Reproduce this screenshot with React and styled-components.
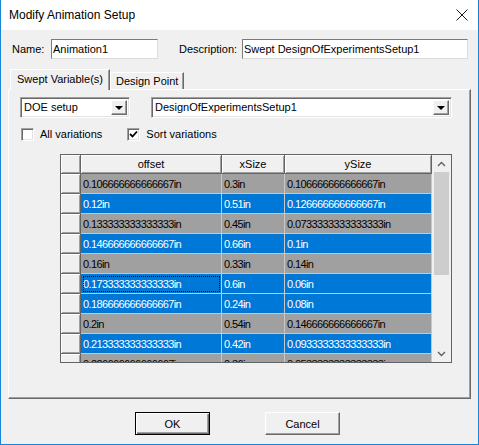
import React from "react";
import styled, { createGlobalStyle } from "styled-components";

const rows = [
  ["0.106666666666667in", "0.3in", "0.106666666666667in", false],
  ["0.12in", "0.51in", "0.126666666666667in", true],
  ["0.133333333333333in", "0.45in", "0.0733333333333333in", false],
  ["0.146666666666667in", "0.66in", "0.1in", true],
  ["0.16in", "0.33in", "0.14in", false],
  ["0.173333333333333in", "0.6in", "0.06in", true],
  ["0.186666666666667in", "0.24in", "0.08in", true],
  ["0.2in", "0.54in", "0.146666666666667in", false],
  ["0.213333333333333in", "0.42in", "0.0933333333333333in", true],
  ["0.226666666666667in", "0.36in", "0.0533333333333333in", false],
];

function App() {
  return (
    <>
      <GlobalStyle />
      <Window>
        <TitleBar>
          <Title>Modify Animation Setup</Title>
          <CloseIcon width="12" height="12" viewBox="0 0 12 12">
            <path d="M0.5 0.5 L11.5 11.5 M11.5 0.5 L0.5 11.5" stroke="#1a1a1a" strokeWidth="1" fill="none" />
          </CloseIcon>
        </TitleBar>
        <Body>
          <FieldRow>
            <Label>Name:</Label>
            <TextBox $width={107}>Animation1</TextBox>
            <Label $gap={21}>Description:</Label>
            <TextBox $width={226}>Swept DesignOfExperimentsSetup1</TextBox>
          </FieldRow>

          <TabStrip>
            <Tab $active>Swept Variable(s)</Tab>
            <Tab>Design Point</Tab>
          </TabStrip>
          <Panel>
            <ComboRow>
              <Combo $width={110}>
                <ComboText>DOE setup</ComboText>
                <ComboButton>
                  <Arrow />
                </ComboButton>
              </Combo>
              <Combo $width={301}>
                <ComboText>DesignOfExperimentsSetup1</ComboText>
                <ComboButton>
                  <Arrow />
                </ComboButton>
              </Combo>
            </ComboRow>

            <CheckRow>
              <CheckItem>
                <CheckBox />
                All variations
              </CheckItem>
              <CheckItem>
                <CheckBox>
                  <svg width="9" height="9" viewBox="0 0 9 9">
                    <path d="M1 4 L3.5 6.5 L8 1.5" stroke="#000" strokeWidth="1.8" fill="none" />
                  </svg>
                </CheckBox>
                Sort variations
              </CheckItem>
            </CheckRow>

            <GridFrame>
              <GridBody>
                <Row $header>
                  <RowHead />
                  <HeadCell>offset</HeadCell>
                  <HeadCell>xSize</HeadCell>
                  <HeadCell>ySize</HeadCell>
                </Row>
                {rows.map(([offset, x, y, selected], i) => (
                  <Row key={i}>
                    <RowHead />
                    <Cell $selected={selected} $focus={i === 5}>{offset}</Cell>
                    <Cell $selected={selected}>{x}</Cell>
                    <Cell $selected={selected}>{y}</Cell>
                  </Row>
                ))}
              </GridBody>
              <ScrollBar>
                <ScrollArrow>
                  <svg width="9" height="6" viewBox="0 0 9 6">
                    <path d="M1 5 L4.5 1.5 L8 5" stroke="#606060" strokeWidth="1.4" fill="none" />
                  </svg>
                </ScrollArrow>
                <Thumb />
                <ScrollSpace />
                <ScrollArrow>
                  <svg width="9" height="6" viewBox="0 0 9 6">
                    <path d="M1 1 L4.5 4.5 L8 1" stroke="#606060" strokeWidth="1.4" fill="none" />
                  </svg>
                </ScrollArrow>
              </ScrollBar>
            </GridFrame>
          </Panel>

          <ButtonRow>
            <Button $default>OK</Button>
            <Button>Cancel</Button>
          </ButtonRow>
        </Body>
      </Window>
    </>
  );
}

export default App;

const GlobalStyle = createGlobalStyle`
  body {
    margin: 0;
    background: #ffffff;
  }
  * {
    box-sizing: border-box;
  }
`;

const Window = styled.div`
  width: 479px;
  height: 445px;
  display: flex;
  flex-direction: column;
  border: 1px solid #1883d7;
  border-top: none;
  font-family: "Liberation Sans", Arial, sans-serif;
  font-size: 11px;
  color: #000;
  overflow: hidden;
`;

const TitleBar = styled.div`
  height: 30px;
  background: #ffffff;
  display: flex;
  align-items: center;
  justify-content: space-between;
  padding: 0 10px 0 8px;
`;

const Title = styled.div`
  font-size: 12px;
  color: #000;
`;

const CloseIcon = styled.svg`
  display: block;
`;

const Body = styled.div`
  flex: 1;
  background: #f0f0f0;
  display: flex;
  flex-direction: column;
  padding: 0 7px;
`;

const FieldRow = styled.div`
  display: flex;
  align-items: center;
  margin-top: 9px;
  padding-left: 4px;
  height: 20px;
`;

const Label = styled.span`
  margin-left: ${(p) => p.$gap || 0}px;
  width: ${(p) => (p.$gap ? 63 : 39)}px;
`;

const TextBox = styled.div`
  width: ${(p) => p.$width}px;
  height: 20px;
  background: #ffffff;
  border: 1px solid;
  border-color: #7a7a7a #dcdcdc #dcdcdc #7a7a7a;
  padding: 3px 1px 0;
  white-space: nowrap;
  overflow: hidden;
`;

const TabStrip = styled.div`
  display: flex;
  align-items: flex-end;
  margin-top: 10px;
  padding-left: 2px;
  height: 20px;
  position: relative;
  z-index: 1;
`;

const Tab = styled.div`
  height: ${(p) => (p.$active ? 21 : 17)}px;
  margin-bottom: ${(p) => (p.$active ? -1 : 0)}px;
  padding: ${(p) => (p.$active ? "3px 6px 0 6px" : "2px 5px 0 5px")};
  background: #f0f0f0;
  border: 1px solid;
  border-bottom: none;
  border-color: #ffffff #696969 transparent #ffffff;
  box-shadow: inset -1px 0 #a0a0a0;
  white-space: nowrap;
`;

const Panel = styled.div`
  height: 310px;
  border: 1px solid;
  border-color: #ffffff #696969 #696969 #ffffff;
  box-shadow: inset -1px -1px #a0a0a0;
  padding: 7px 0 0 11px;
  display: flex;
  flex-direction: column;
`;

const ComboRow = styled.div`
  display: flex;
  gap: 21px;
`;

const Combo = styled.div`
  width: ${(p) => p.$width}px;
  height: 21px;
  display: flex;
  background: #ffffff;
  border: 1px solid;
  border-color: #a0a0a0 #ffffff #ffffff #a0a0a0;
  box-shadow: inset 1px 1px #696969, inset -1px -1px #e3e3e3;
  padding: 2px;
`;

const ComboText = styled.div`
  flex: 1;
  padding: 1px 0 0 1px;
  white-space: nowrap;
  overflow: hidden;
`;

const ComboButton = styled.div`
  width: 16px;
  background: #f0f0f0;
  border: 1px solid;
  border-color: #ffffff #696969 #696969 #ffffff;
  box-shadow: inset -1px -1px #a0a0a0;
  display: flex;
  align-items: center;
  justify-content: center;
`;

const Arrow = styled.div`
  width: 0;
  height: 0;
  border-left: 4px solid transparent;
  border-right: 4px solid transparent;
  border-top: 4px solid #000;
  margin-top: 1px;
`;

const CheckRow = styled.div`
  display: flex;
  gap: 25px;
  margin-top: 10px;
  padding-left: 1px;
  height: 13px;
`;

const CheckItem = styled.div`
  display: flex;
  align-items: center;
  gap: 6px;
  line-height: 13px;
`;

const CheckBox = styled.div`
  width: 13px;
  height: 13px;
  background: #ffffff;
  border: 1px solid;
  border-color: #a0a0a0 #ffffff #ffffff #a0a0a0;
  box-shadow: inset 1px 1px #696969, inset -1px -1px #e3e3e3;
  display: flex;
  align-items: center;
  justify-content: center;
`;

const GridFrame = styled.div`
  margin: 13px 0 0 40px;
  width: 392px;
  height: 209px;
  border: 1px solid #646464;
  display: flex;
  overflow: hidden;
  background: #a0a0a0;
`;

const GridBody = styled.div`
  flex: 1;
  overflow: hidden;
  font-size: 11px;
`;

const Row = styled.div`
  display: grid;
  grid-template-columns: 20px 141px 63px 147px;
  height: ${(p) => (p.$header ? 19 : 20)}px;
`;

const RowHead = styled.div`
  background: #f0f0f0;
  border-right: 1px solid #646464;
  border-bottom: 1px solid #696969;
  box-shadow: inset 1px 1px #ffffff, inset -1px -1px #a0a0a0;
`;

const HeadCell = styled.div`
  background: #f0f0f0;
  border-right: 1px solid #646464;
  border-bottom: 1px solid #646464;
  box-shadow: inset 1px 1px #ffffff, inset -1px -1px #a0a0a0;
  text-align: center;
  padding-top: 3px;
`;

const Cell = styled.div`
  background: ${(p) => (p.$selected ? "#0078d7" : "#a0a0a0")};
  color: ${(p) => (p.$selected ? "#ffffff" : "#000000")};
  border-right: 1px solid #c8c8c8;
  border-bottom: 1px solid #c8c8c8;
  padding: 4px 0 0 2px;
  letter-spacing: -0.6px;
  white-space: nowrap;
  overflow: hidden;
  outline: ${(p) => (p.$focus ? "1px dotted #101010" : "none")};
  outline-offset: -3px;
`;

const ScrollBar = styled.div`
  width: 19px;
  background: #f0f0f0;
  display: flex;
  flex-direction: column;
`;

const ScrollArrow = styled.div`
  height: 17px;
  display: flex;
  align-items: center;
  justify-content: center;
`;

const Thumb = styled.div`
  height: 103px;
  margin: 0 2px;
  background: #cdcdcd;
`;

const ScrollSpace = styled.div`
  flex: 1;
`;

const ButtonRow = styled.div`
  display: flex;
  justify-content: center;
  gap: 55px;
  margin-top: 13px;
  padding-right: 4px;
`;

const Button = styled.div`
  width: 75px;
  height: 23px;
  display: flex;
  align-items: center;
  justify-content: center;
  background: #f0f0f0;
  border: 1px solid;
  border-color: ${(p) => (p.$default ? "#000 #000 #000 #000" : "#ffffff #696969 #696969 #ffffff")};
  box-shadow: ${(p) =>
    p.$default
      ? "inset 1px 1px #ffffff, inset -1px -1px #696969, inset -2px -2px #a0a0a0"
      : "inset -1px -1px #a0a0a0"};
`;
